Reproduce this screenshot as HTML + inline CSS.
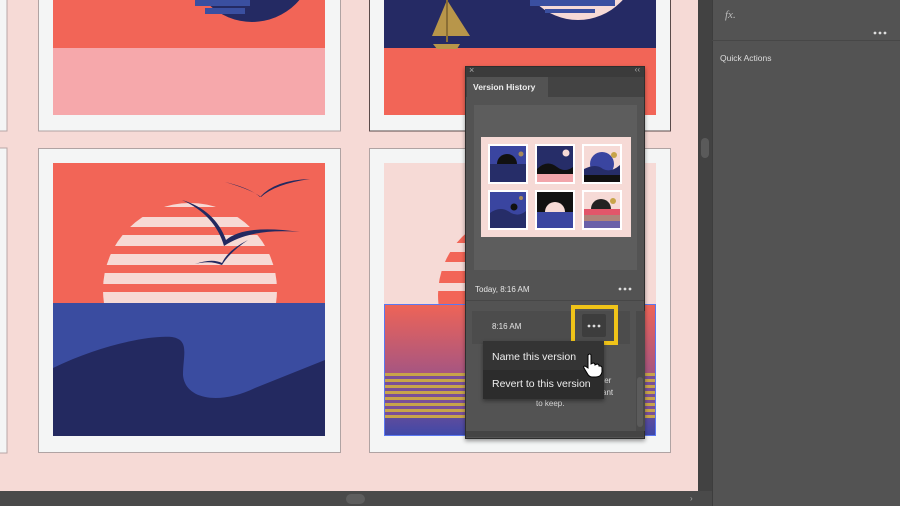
<!DOCTYPE html>
<html><head><meta charset="utf-8"><style>
*{margin:0;padding:0;box-sizing:border-box}
body{width:900px;height:506px;overflow:hidden;background:#f6dad6;font-family:"Liberation Sans",sans-serif;position:relative}
.abs{position:absolute}
.t{color:#e6e6e6;font-size:8.5px}
</style></head><body>
<svg class="abs" style="left:0;top:0" width="700" height="492" viewBox="0 0 700 492">
<defs>
<linearGradient id="g1" x1="0" y1="0" x2="0" y2="1"><stop offset="0" stop-color="#ee6457"/><stop offset="0.55" stop-color="#a35583"/><stop offset="1" stop-color="#3f48a8"/></linearGradient>
<clipPath id="c3"><rect x="53" y="163" width="272" height="140"/></clipPath>
<clipPath id="c4"><rect x="384" y="163" width="272" height="141"/></clipPath>
<clipPath id="c1"><rect x="53" y="0" width="272" height="48"/></clipPath>
<clipPath id="c2"><rect x="384" y="0" width="272" height="48"/></clipPath>
</defs>
<rect width="700" height="492" fill="#f6dad6"/>
<rect x="-5" y="-2" width="12" height="133" fill="#f4f5f5" stroke="#b8a6a6"/>
<rect x="-5" y="148" width="12" height="305" fill="#f4f5f5" stroke="#b8a6a6"/>
<rect x="38.5" y="-2" width="302" height="133" fill="#f4f5f5" stroke="#b0a3a3"/>
<rect x="53" y="0" width="272" height="48" fill="#f26557"/>
<rect x="53" y="48" width="272" height="67" fill="#f6a8ab"/>
<g clip-path="url(#c1)"><circle cx="252" cy="-40" r="62" fill="#242a63"/><rect x="195" y="0" width="55" height="6" fill="#3a4fa0"/><rect x="205" y="8" width="40" height="6" fill="#3a4fa0"/></g>
<rect x="369.5" y="-2" width="301" height="133" fill="#f4f5f5" stroke="#5a4a4a"/>
<rect x="384" y="0" width="272" height="48" fill="#252a64"/>
<rect x="384" y="48" width="272" height="67" fill="#f26557"/>
<g clip-path="url(#c2)"><circle cx="578" cy="-40" r="60" fill="#f6dad6"/><rect x="530" y="0" width="85" height="6" fill="#3a4fa0"/><rect x="545" y="9" width="50" height="4" fill="#3a4fa0"/></g>
<polygon points="447,0 470,36 432,36" fill="#b8964a"/><rect x="446" y="0" width="2" height="42" fill="#8a6e35"/>
<polygon points="433,44 460,44 457,49 437,49" fill="#b8964a"/>
<rect x="38.5" y="148.5" width="302" height="304" fill="#f4f5f5" stroke="#b0a3a3"/>
<rect x="53" y="163" width="272" height="140" fill="#f26557"/>
<g clip-path="url(#c3)">
<circle cx="190" cy="290" r="87" fill="#f7d9d4"/>
<g fill="#f26557"><rect x="90" y="207" width="200" height="10"/><rect x="90" y="227" width="200" height="8"/><rect x="90" y="246" width="200" height="8"/><rect x="90" y="265" width="200" height="8"/><rect x="90" y="284" width="200" height="8"/></g>
</g>
<rect x="53" y="303" width="272" height="133" fill="#3a4ca0"/>
<path d="M53 368 C100 345 150 335 172 337 C190 340 183 355 183 375 C185 400 220 405 255 388 L325 360 L325 436 L53 436Z" fill="#232960"/>
<g fill="#232960">
<path d="M182 200 Q215 210 226 240 Q245 224 300 232 Q250 228 224 246 Q215 215 182 200Z"/>
<path d="M225 182 Q250 188 260 197 Q275 180 310 179 Q275 184 261 197 Q252 190 225 182Z"/>
<path d="M195 264 Q212 258 222 263 Q228 250 248 240 Q230 252 222 265 Q210 260 195 264Z"/>
</g>
<rect x="369.5" y="148.5" width="301" height="304" fill="#f4f5f5" stroke="#b0a3a3"/>
<rect x="384" y="163" width="272" height="141" fill="#f6dad6"/>
<g clip-path="url(#c4)"><circle cx="520" cy="295" r="82" fill="#f26557"/>
<g fill="#f6dad6"><rect x="420" y="224" width="200" height="8"/><rect x="420" y="243" width="200" height="9"/><rect x="420" y="262" width="200" height="9"/><rect x="420" y="283" width="200" height="8"/></g></g>
<rect x="384.5" y="304.5" width="271" height="131" fill="url(#g1)" stroke="#5b78f0"/>
<rect x="385" y="373" width="270" height="45" fill="#7a4f98"/>
<g fill="#c8a44a"><rect x="385" y="373" width="270" height="3"/><rect x="385" y="379" width="270" height="3"/><rect x="385" y="385" width="270" height="3"/><rect x="385" y="391" width="270" height="3"/><rect x="385" y="397" width="270" height="3"/><rect x="385" y="403" width="270" height="3"/><rect x="385" y="409" width="270" height="3"/><rect x="385" y="415" width="270" height="3"/></g>
</svg>
<div class="abs" style="left:698px;top:0;width:14px;height:492px;background:#424242"></div>
<div class="abs" style="left:701px;top:138px;width:8px;height:20px;background:#5a5a5a;border-radius:4px"></div>
<div class="abs" style="left:0;top:491px;width:712px;height:15px;background:#4a4a4a"></div>
<div class="abs" style="left:346px;top:494px;width:19px;height:10px;background:#5e5e5e;border-radius:5px"></div>
<div class="abs" style="left:690px;top:494px;color:#aaa;font-size:8px">›</div>
<div class="abs" style="left:712px;top:0;width:188px;height:506px;background:#535353;border-left:1px solid #3d3d3d"></div>
<div class="abs" style="left:725px;top:9px;color:#bbb;font-size:11px;font-style:italic;font-family:'Liberation Serif',serif">fx.</div>
<svg class="abs" style="left:873px;top:30px" width="14" height="6"><g fill="#ddd"><circle cx="2" cy="3" r="1.4"/><circle cx="7" cy="3" r="1.4"/><circle cx="12" cy="3" r="1.4"/></g></svg>
<div class="abs" style="left:712px;top:40px;width:188px;height:1px;background:#474747"></div>
<div class="abs t" style="left:720px;top:53px;font-size:8.5px;color:#ddd">Quick Actions</div>
<div class="abs" style="left:465px;top:66px;width:180px;height:373px;background:#535353;border:1px solid #2e2e2e;box-shadow:0 2px 4px rgba(0,0,0,.4)">
<div style="height:10px;background:#3b3b3b;position:relative"><span style="position:absolute;left:3px;top:-2px;color:#aaa;font-size:9px">×</span><span style="position:absolute;right:4px;top:-2px;color:#aaa;font-size:8px">‹‹</span></div>
<div style="height:20px;background:#434343;position:relative"><div style="position:absolute;left:1px;top:0;width:81px;height:20px;background:#535353;color:#eee;font-weight:bold;font-size:8.5px;line-height:20px;padding-left:6px">Version History</div></div>
<div style="position:absolute;left:8px;top:38px;width:163px;height:165px;background:#5d5d5d"></div>
<svg style="position:absolute;left:15px;top:70px" width="150" height="100" viewBox="0 0 150 100">
<rect width="150" height="100" fill="#f6dad6"/>
<g><rect x="7" y="7" width="40" height="40" fill="#fff"/><rect x="9" y="9" width="36" height="36" fill="#3a45a0"/><rect x="9" y="27" width="36" height="18" fill="#262d68"/><path d="M16 27a10 10 0 0 1 20 0Z" fill="#111"/><circle cx="40" cy="17" r="2.5" fill="#a88a5a"/></g>
<g><rect x="54" y="7" width="40" height="40" fill="#fff"/><rect x="56" y="9" width="36" height="36" fill="#262d68"/><path d="M56 32 Q66 22 76 30 Q84 36 92 30 L92 37 L56 37Z" fill="#111"/><rect x="56" y="37" width="36" height="8" fill="#f2a6ab"/><circle cx="85" cy="16" r="3.5" fill="#f6dad6"/></g>
<g><rect x="101" y="7" width="40" height="40" fill="#fff"/><rect x="103" y="9" width="36" height="36" fill="#f6dad6"/><circle cx="121" cy="27" r="12" fill="#3a45a0"/><path d="M103 32 Q115 26 122 32 Q130 36 139 28 L139 45 L103 45Z" fill="#262d68"/><rect x="103" y="38" width="36" height="7" fill="#111"/><circle cx="133" cy="18" r="3" fill="#c8a44a"/></g>
<g><rect x="7" y="53" width="40" height="40" fill="#fff"/><rect x="9" y="55" width="36" height="36" fill="#3a45a0"/><path d="M9 76 Q20 68 30 76 Q38 80 45 74 L45 91 L9 91Z" fill="#262d68"/><circle cx="33" cy="70" r="3.5" fill="#111"/><circle cx="40" cy="61" r="2" fill="#a88a5a"/></g>
<g><rect x="54" y="53" width="40" height="40" fill="#fff"/><rect x="56" y="55" width="36" height="36" fill="#111"/><path d="M64 75a10 10 0 0 1 20 0Z" fill="#f6dad6"/><rect x="56" y="75" width="36" height="16" fill="#3a45a0"/></g>
<g><rect x="101" y="53" width="40" height="40" fill="#fff"/><rect x="103" y="55" width="36" height="36" fill="#f6dad6"/><path d="M110 72a10 10 0 0 1 20 0Z" fill="#222"/><circle cx="132" cy="64" r="3" fill="#c8a44a"/><rect x="103" y="72" width="36" height="6" fill="#e2566a"/><rect x="103" y="78" width="36" height="6" fill="#b0847a"/><rect x="103" y="84" width="36" height="7" fill="#6a60a8"/></g>
</svg>
<div class="t" style="position:absolute;left:9px;top:218px;font-size:8px">Today, 8:16 AM</div>
<svg style="position:absolute;left:152px;top:219px" width="14" height="6"><g fill="#ddd"><circle cx="2" cy="3" r="1.4"/><circle cx="7" cy="3" r="1.4"/><circle cx="12" cy="3" r="1.4"/></g></svg>
<div style="position:absolute;left:0;top:233px;width:178px;height:1px;background:#474747"></div>
<div style="position:absolute;left:6px;top:244px;width:158px;height:33px;background:#4c4c4c"></div>
<div class="t" style="position:absolute;left:26px;top:255px;font-size:8px">8:16 AM</div>
<div style="position:absolute;left:170px;top:244px;width:9px;height:120px;background:#4a4a4a"></div>
<div style="position:absolute;left:171px;top:310px;width:6px;height:50px;background:#5b5b5b;border-radius:3px"></div>
<div class="t" style="position:absolute;left:136px;top:308px;font-size:8px;line-height:12px;color:#ddd">ter<br>ant</div>
<div class="t" style="position:absolute;left:70px;top:332px;font-size:8px;color:#ddd">to keep.</div>
<div style="position:absolute;left:0;top:364px;width:178px;height:6px;background:#444"></div>
</div>
<div class="abs" style="left:571px;top:305px;width:47px;height:40px;border:4px solid #f0c419"></div>
<div class="abs" style="left:582px;top:314px;width:24px;height:23px;background:#3d3d3d;border-radius:2px"></div>
<svg class="abs" style="left:587px;top:323px" width="14" height="6"><g fill="#ddd"><circle cx="2" cy="3" r="1.4"/><circle cx="7" cy="3" r="1.4"/><circle cx="12" cy="3" r="1.4"/></g></svg>
<div class="abs" style="left:483px;top:341px;width:121px;height:58px;background:#2c2c2c;box-shadow:0 2px 4px rgba(0,0,0,.4)">
<div style="height:29px;background:#343434;color:#eee;font-size:10.5px;line-height:32px;padding-left:9px">Name this version</div>
<div style="height:29px;color:#eee;font-size:10.5px;line-height:28px;padding-left:9px">Revert to this version</div>
</div>
<svg class="abs" style="left:582px;top:353px" width="22" height="26" viewBox="0 0 22 26"><path d="M6 2 Q8 0 9 2 L9 11 L11 10 Q13 10 13 12 L15 11 Q17 11 17 13 L18 13 Q20 13 20 15 L20 19 Q19 24 14 24 L10 24 Q7 24 5 20 L2 15 Q1 13 3 13 L6 15Z" fill="#fff" stroke="#000" stroke-width="1"/></svg>
</body></html>
